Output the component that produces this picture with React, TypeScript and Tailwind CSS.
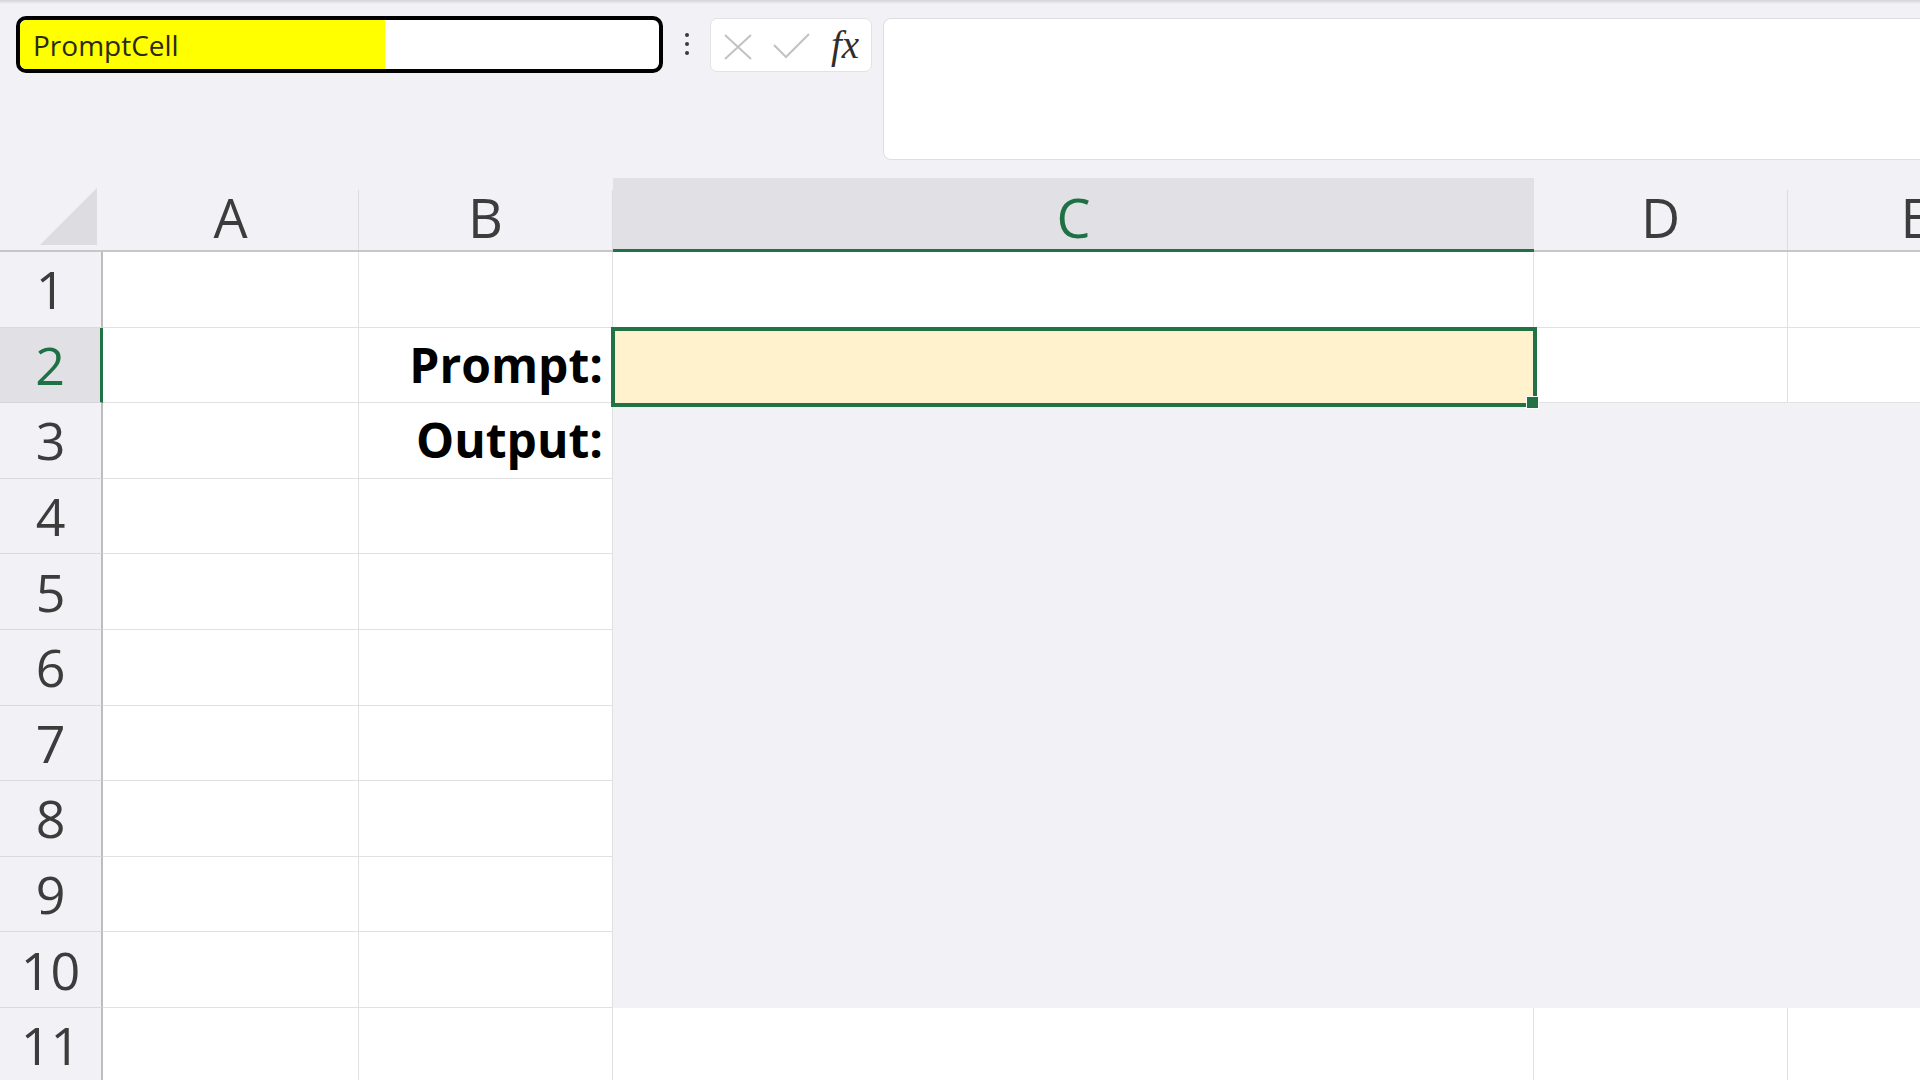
import React from "react";

const COLS = [
  { id: "A", w: "w-[256px]" },
  { id: "B", w: "w-[254px]" },
  { id: "C", w: "w-[921px]" },
  { id: "D", w: "w-[254px]" },
  { id: "E", w: "w-[256px]" },
];

const ROWS = [1, 2, 3, 4, 5, 6, 7, 8, 9, 10, 11];

const LABELS: Record<string, string> = {
  "B2": "Prompt:",
  "B3": "Output:",
};

function FormulaButtons() {
  return (
    <div className="mt-[14px] flex h-[54px] w-[162px] shrink-0 items-center rounded-[7px] border border-[#e2e2e4] bg-white pl-[12px]">
      <svg width="30" height="28" viewBox="0 0 30 28" className="mt-[4px]">
        <path d="M2 2 L28 26 M28 2 L2 26" stroke="#c2c2c2" strokeWidth="2" fill="none" />
      </svg>
      <svg width="38" height="28" viewBox="0 0 38 28" className="ml-[20px] mt-[2px]">
        <path d="M1 13 L13 25 L36 2" stroke="#c2c2c2" strokeWidth="2" fill="none" />
      </svg>
      <span className="ml-[20px] mb-[2px] font-['Liberation_Serif',serif] text-[39px] italic leading-none text-[#2e2e2e]">
        fx
      </span>
    </div>
  );
}

function Toolbar() {
  return (
    <div className="flex h-[174px] items-start">
      <div className="ml-[16px] mt-[12px] flex h-[57px] w-[647px] shrink-0 overflow-hidden rounded-[10px] border-[4px] border-black bg-white">
        <div className="flex w-[365px] items-center bg-[#ffff00] pl-[13px] text-[28px] text-[#2a2a1a]">
          PromptCell
        </div>
      </div>
      <div className="mt-[29px] flex w-[47px] shrink-0 flex-col items-center gap-[5px]">
        <div className="h-[4px] w-[4px] rounded-full bg-[#3a3a3a]" />
        <div className="h-[4px] w-[4px] rounded-full bg-[#3a3a3a]" />
        <div className="h-[4px] w-[4px] rounded-full bg-[#3a3a3a]" />
      </div>
      <FormulaButtons />
      <div className="ml-[11px] mt-[14px] h-[142px] w-[1100px] shrink-0 rounded-[8px] border border-[#dedee0] bg-white" />
    </div>
  );
}

function HeaderRow() {
  return (
    <div className="flex h-[74px]">
      <div className="flex w-[103px] shrink-0 items-end justify-end border-b-2 border-[#c6c6c8] pb-[5px] pr-[6px]">
        <svg width="57" height="57" viewBox="0 0 57 57">
          <polygon points="57,0 57,57 0,57" fill="#dddce1" />
        </svg>
      </div>
      {COLS.map((c) =>
        c.id === "C" ? (
          <div
            key={c.id}
            className={`${c.w} flex shrink-0 items-center justify-center border-b-[3px] border-[#217346] bg-[#e1e0e4] pt-[6px] text-[54px] text-[#1e7145]`}
          >
            {c.id}
          </div>
        ) : (
          <div key={c.id} className={`${c.w} flex shrink-0 border-b-2 border-[#c6c6c8]`}>
            <div className="flex flex-1 items-center justify-center pt-[6px] text-[54px] text-[#3c3c3c]">
              {c.id}
            </div>
            <div className="mt-[12px] w-px bg-[#dcdcde]" />
          </div>
        )
      )}
    </div>
  );
}

function Cell({ col, row, w }: { col: string; row: number; w: string }) {
  const key = `${col}${row}`;
  const gray = row >= 3 && row <= 10 && (col === "C" || col === "D" || col === "E");

  if (key === "C2") {
    return (
      <div className={`${w} relative shrink-0 bg-[#fff2cc]`}>
        <div className="absolute -bottom-[4px] -left-[2px] -right-[3px] -top-[1px] z-10 border-[4px] border-[#217346]" />
        <div className="absolute -bottom-[6px] -right-[5px] z-20 h-[13px] w-[13px] border border-white bg-[#217346]" />
      </div>
    );
  }

  if (gray) {
    return <div className={`${w} shrink-0 bg-[#f2f1f5]`} />;
  }

  const label = LABELS[key];
  return (
    <div
      className={`${w} flex shrink-0 items-center justify-end border-b border-r border-[#e1e1e3] bg-white pr-[9px] text-[48px] font-bold text-black`}
    >
      {label}
    </div>
  );
}

function Row({ n }: { n: number }) {
  const active = n === 2;
  return (
    <div className="flex h-[75.6px]">
      <div
        className={
          active
            ? "flex w-[103px] shrink-0 items-center justify-center border-b border-r-[3px] border-b-[#d6d6d8] border-r-[#217346] bg-[#e1e0e4] text-[52px] text-[#1e7145]"
            : "flex w-[103px] shrink-0 items-center justify-center border-b border-r-2 border-b-[#dadadc] border-r-[#bdbdbf] text-[52px] text-[#3c3c3c]"
        }
      >
        {n}
      </div>
      {COLS.map((c) => (
        <Cell key={c.id} col={c.id} row={n} w={c.w} />
      ))}
    </div>
  );
}

export default function App() {
  return (
    <div className="h-[1080px] w-[1920px] overflow-hidden bg-[#f2f1f5] font-['Open_Sans',sans-serif] leading-none">
      <div className="h-[4px] bg-gradient-to-b from-[#d4d3d8] to-[#f2f1f5]" />
      <Toolbar />
      <HeaderRow />
      {ROWS.map((n) => (
        <Row key={n} n={n} />
      ))}
    </div>
  );
}
